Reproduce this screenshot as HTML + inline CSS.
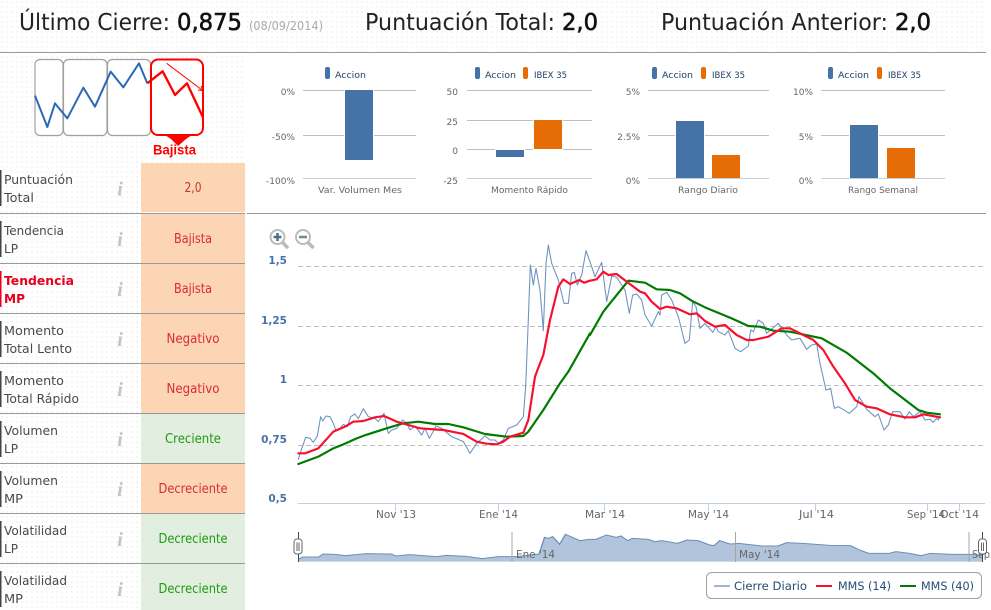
<!DOCTYPE html>
<html lang="es"><head><meta charset="utf-8"><title>Resumen</title>
<style>
html,body{margin:0;padding:0;background:#fff;width:991px;height:610px;overflow:hidden}
svg{display:block;position:absolute;left:0;top:0}
text{font-family:"DejaVu Sans","Liberation Sans",sans-serif}
.h{font-size:23px;fill:#222}
.hb{font-size:23px;fill:#111;stroke:#111;stroke-width:.6px}
.l{font-size:12.5px;fill:#4a4a4a}
.v{font-size:13px;text-anchor:middle}
.r{fill:#d92b3a}.g{fill:#1f9a12}
.i{font-family:"Liberation Serif",serif;font-style:italic;font-weight:bold;font-size:20px;fill:#c4c4c4;text-anchor:middle}
.c{font-size:9px;fill:#666}
.ce{text-anchor:end}
.cl{font-size:9px;fill:#1f3f66}
.x{font-size:10.5px;fill:#666}
.y{font-size:10.5px;fill:#4572a7;font-weight:bold;text-anchor:end}
.lg{font-size:11.5px;fill:#274b75}
.grid{stroke:#c0c0c0;stroke-width:1;fill:none}
.ax{stroke:#c0d0e0;stroke-width:1;fill:none}
</style></head><body>
<svg width="991" height="610" viewBox="0 0 991 610" xmlns="http://www.w3.org/2000/svg">
<defs><pattern id="d" width="5" height="5" patternUnits="userSpaceOnUse"><rect width="5" height="5" fill="#fff"/><rect x="1" y="1" width="2" height="2" fill="#f6f6f6"/></pattern></defs>
<rect x="0" y="0" width="986" height="52" fill="url(#d)"/>
<rect x="0" y="53" width="245" height="557" fill="url(#d)"/>

<!-- header -->
<text class="h" x="19" y="30" textLength="151" lengthAdjust="spacingAndGlyphs">Último Cierre:</text>
<text class="hb" x="177" y="30" textLength="65" lengthAdjust="spacingAndGlyphs">0,875</text>
<text x="249" y="30" font-size="12" fill="#aaa" textLength="74" lengthAdjust="spacingAndGlyphs">(08/09/2014)</text>
<text class="h" x="365" y="30" textLength="190" lengthAdjust="spacingAndGlyphs">Puntuación Total:</text>
<text class="hb" x="562" y="30" textLength="36" lengthAdjust="spacingAndGlyphs">2,0</text>
<text class="h" x="661" y="30" textLength="227" lengthAdjust="spacingAndGlyphs">Puntuación Anterior:</text>
<text class="hb" x="895" y="30" textLength="36" lengthAdjust="spacingAndGlyphs">2,0</text>
<rect x="0" y="52" width="986" height="1" fill="#999"/>
<rect x="247" y="213" width="739" height="1" fill="#999"/>

<!-- logo -->
<g fill="#fff" stroke="#a0a0a0" stroke-width="1.200">
<rect x="35" y="59.500" width="28" height="76" rx="5"/>
<rect x="63.500" y="59.500" width="43.500" height="76" rx="5"/>
<rect x="107.500" y="59.500" width="43" height="76" rx="5"/>
</g>
<rect x="151" y="59.500" width="52" height="75.500" rx="7" fill="#fff" stroke="#f00" stroke-width="2"/>
<polygon points="165,135 192,135 186,139 178,146 171,139" fill="#f00"/>
<g transform="scale(.33333)" fill="none" stroke-linejoin="round">
<polyline points="105,287 142,381 165,310 202,355 250,263 285,320 332,215 370,262 417,190 442,250" stroke="#2a6ab5" stroke-width="6"/>
<polyline points="442,250 488,214 525,285 561,250 609,352" stroke="#f00" stroke-width="7"/>
<polyline points="500,190 606,270" stroke="#f00" stroke-width="3"/>
<polyline points="594,270 609,272 603,258" stroke="#f00" stroke-width="3"/>
</g>
<text x="153" y="154.500" font-size="14" font-weight="bold" fill="#f00" style="font-family:'Liberation Sans',sans-serif" textLength="43" lengthAdjust="spacingAndGlyphs">Bajista</text>

<!-- rows -->
<rect x="141" y="163" width="104" height="49" fill="#fcd5b4"/>
<rect x="141" y="214" width="104" height="49" fill="#fcd5b4"/>
<rect x="141" y="264" width="104" height="49" fill="#fcd5b4"/>
<rect x="141" y="314" width="104" height="49" fill="#fcd5b4"/>
<rect x="141" y="364" width="104" height="49" fill="#fcd5b4"/>
<rect x="141" y="414" width="104" height="49" fill="#e2efe0"/>
<rect x="141" y="464" width="104" height="49" fill="#fcd5b4"/>
<rect x="141" y="514" width="104" height="49" fill="#e2efe0"/>
<rect x="141" y="564" width="104" height="46" fill="#e2efe0"/>
<g fill="#999">
<rect x="0" y="213" width="245" height="1"/><rect x="0" y="263" width="245" height="1"/><rect x="0" y="313" width="245" height="1"/><rect x="0" y="363" width="245" height="1"/><rect x="0" y="413" width="245" height="1"/><rect x="0" y="463" width="245" height="1"/><rect x="0" y="513" width="245" height="1"/><rect x="0" y="563" width="245" height="1"/>
</g>
<g fill="#444">
<rect x="0" y="170" width="1.500" height="36"/><rect x="0" y="221" width="1.500" height="36"/><rect x="0" y="321" width="1.500" height="36"/><rect x="0" y="371" width="1.500" height="36"/><rect x="0" y="421" width="1.500" height="36"/><rect x="0" y="471" width="1.500" height="36"/><rect x="0" y="521" width="1.500" height="36"/><rect x="0" y="571" width="1.500" height="36"/>
</g>
<rect x="0" y="271" width="1.500" height="36" fill="#e8001c"/>

<text class="l" x="4" y="184" textLength="69" lengthAdjust="spacingAndGlyphs">Puntuación</text><text class="l" x="4" y="202" textLength="30" lengthAdjust="spacingAndGlyphs">Total</text>
<text class="l" x="4" y="235" textLength="60" lengthAdjust="spacingAndGlyphs">Tendencia</text><text class="l" x="4" y="253" textLength="14" lengthAdjust="spacingAndGlyphs">LP</text>
<text x="4" y="285" font-size="12.500" font-weight="bold" fill="#e8001c" textLength="70" lengthAdjust="spacingAndGlyphs">Tendencia</text><text x="4" y="303" font-size="12.500" font-weight="bold" fill="#e8001c" textLength="21" lengthAdjust="spacingAndGlyphs">MP</text>
<text class="l" x="4" y="335" textLength="60" lengthAdjust="spacingAndGlyphs">Momento</text><text class="l" x="4" y="353" textLength="68" lengthAdjust="spacingAndGlyphs">Total Lento</text>
<text class="l" x="4" y="385" textLength="60" lengthAdjust="spacingAndGlyphs">Momento</text><text class="l" x="4" y="403" textLength="75" lengthAdjust="spacingAndGlyphs">Total Rápido</text>
<text class="l" x="4" y="435" textLength="54" lengthAdjust="spacingAndGlyphs">Volumen</text><text class="l" x="4" y="453" textLength="14" lengthAdjust="spacingAndGlyphs">LP</text>
<text class="l" x="4" y="485" textLength="54" lengthAdjust="spacingAndGlyphs">Volumen</text><text class="l" x="4" y="503" textLength="19" lengthAdjust="spacingAndGlyphs">MP</text>
<text class="l" x="4" y="535" textLength="63" lengthAdjust="spacingAndGlyphs">Volatilidad</text><text class="l" x="4" y="553" textLength="14" lengthAdjust="spacingAndGlyphs">LP</text>
<text class="l" x="4" y="585" textLength="63" lengthAdjust="spacingAndGlyphs">Volatilidad</text><text class="l" x="4" y="603" textLength="19" lengthAdjust="spacingAndGlyphs">MP</text>

<text class="i" x="120" y="195.500">i</text><text class="i" x="120" y="246">i</text><text class="i" x="120" y="296">i</text><text class="i" x="120" y="346">i</text><text class="i" x="120" y="396">i</text><text class="i" x="120" y="446">i</text><text class="i" x="120" y="496">i</text><text class="i" x="120" y="546">i</text><text class="i" x="120" y="596">i</text>

<text class="v" x="193" y="192" fill="#c0392b" textLength="17" lengthAdjust="spacingAndGlyphs">2,0</text>
<text class="v r" x="193" y="243" textLength="38" lengthAdjust="spacingAndGlyphs">Bajista</text>
<text class="v r" x="193" y="293" textLength="38" lengthAdjust="spacingAndGlyphs">Bajista</text>
<text class="v r" x="193" y="343" textLength="53" lengthAdjust="spacingAndGlyphs">Negativo</text>
<text class="v r" x="193" y="393" textLength="53" lengthAdjust="spacingAndGlyphs">Negativo</text>
<text class="v g" x="193" y="443" textLength="56" lengthAdjust="spacingAndGlyphs">Creciente</text>
<text class="v r" x="193" y="493" textLength="69" lengthAdjust="spacingAndGlyphs">Decreciente</text>
<text class="v g" x="193" y="543" textLength="69" lengthAdjust="spacingAndGlyphs">Decreciente</text>
<text class="v g" x="193" y="593" textLength="69" lengthAdjust="spacingAndGlyphs">Decreciente</text>

<!-- bar chart 1 -->
<path class="grid" d="M303 90.500H416M303 135.500H416"/><path class="ax" d="M303 178.500H416"/>
<rect x="344" y="89.500" width="30" height="71.500" fill="#fff"/><rect x="345" y="90" width="28" height="70" fill="#4572a7"/>
<text class="c ce" x="295" y="95">0%</text><text class="c ce" x="295" y="140">-50%</text><text class="c ce" x="295" y="184">-100%</text>
<text class="c" x="318" y="193" textLength="84" lengthAdjust="spacingAndGlyphs">Var. Volumen Mes</text>
<rect x="325" y="67" width="5" height="12" rx="2" fill="#4572a7"/><text class="cl" x="335" y="78" textLength="31" lengthAdjust="spacingAndGlyphs">Accion</text>

<!-- bar chart 2 -->
<path class="grid" d="M467 90.500H592M467 120.500H592M467 149.500H592"/><path class="ax" d="M467 178.500H592"/>
<rect x="495" y="149" width="30" height="9" fill="#fff"/><rect x="496" y="150" width="28" height="7" fill="#4572a7"/>
<rect x="533" y="119" width="30" height="31" fill="#fff"/><rect x="534" y="120" width="28" height="29" fill="#e66c05"/>
<text class="c ce" x="458" y="95">50</text><text class="c ce" x="458" y="125">25</text><text class="c ce" x="458" y="154">0</text><text class="c ce" x="458" y="184">-25</text>
<text class="c" x="491" y="193" textLength="77" lengthAdjust="spacingAndGlyphs">Momento Rápido</text>
<rect x="475" y="67" width="5" height="12" rx="2" fill="#4572a7"/><text class="cl" x="485" y="78" textLength="31" lengthAdjust="spacingAndGlyphs">Accion</text>
<rect x="523" y="67" width="5" height="12" rx="2" fill="#e66c05"/><text class="cl" x="534" y="78" textLength="33" lengthAdjust="spacingAndGlyphs">IBEX 35</text>

<!-- bar chart 3 -->
<path class="grid" d="M648 90.500H769M648 135.500H769"/><path class="ax" d="M648 178.500H769"/>
<rect x="675" y="120" width="30" height="58" fill="#fff"/><rect x="676" y="121" width="28" height="57" fill="#4572a7"/>
<rect x="712" y="155" width="28" height="23" fill="#e66c05"/>
<text class="c ce" x="640" y="95">5%</text><text class="c ce" x="640" y="140">2.5%</text><text class="c ce" x="640" y="184">0%</text>
<text class="c" x="678" y="193" textLength="60" lengthAdjust="spacingAndGlyphs">Rango Diario</text>
<rect x="652" y="67" width="5" height="12" rx="2" fill="#4572a7"/><text class="cl" x="662" y="78" textLength="31" lengthAdjust="spacingAndGlyphs">Accion</text>
<rect x="701" y="67" width="5" height="12" rx="2" fill="#e66c05"/><text class="cl" x="712" y="78" textLength="33" lengthAdjust="spacingAndGlyphs">IBEX 35</text>

<!-- bar chart 4 -->
<path class="grid" d="M821 90.500H945M821 135.500H945"/><path class="ax" d="M821 178.500H945"/>
<rect x="849" y="124" width="30" height="54" fill="#fff"/><rect x="850" y="125" width="28" height="53" fill="#4572a7"/>
<rect x="887" y="148" width="28" height="30" fill="#e66c05"/>
<text class="c ce" x="813" y="95">10%</text><text class="c ce" x="813" y="140">5%</text><text class="c ce" x="813" y="184">0%</text>
<text class="c" x="848" y="193" textLength="70" lengthAdjust="spacingAndGlyphs">Rango Semanal</text>
<rect x="828" y="67" width="5" height="12" rx="2" fill="#4572a7"/><text class="cl" x="838" y="78" textLength="31" lengthAdjust="spacingAndGlyphs">Accion</text>
<rect x="877" y="67" width="5" height="12" rx="2" fill="#e66c05"/><text class="cl" x="888" y="78" textLength="33" lengthAdjust="spacingAndGlyphs">IBEX 35</text>

<!-- zoom icons -->
<g fill="none" stroke-linecap="round">
<path d="M283 243L287 247" stroke="#bbb" stroke-width="3.500"/><circle cx="277.500" cy="237" r="7" fill="#fff" stroke="#bbb" stroke-width="2"/><path d="M273.500 237H281.500M277.500 233V241" stroke="#4d7287" stroke-width="2.500" stroke-linecap="butt"/>
<path d="M308.500 243L312.500 247" stroke="#bbb" stroke-width="3.500"/><circle cx="303" cy="237" r="7" fill="#fff" stroke="#bbb" stroke-width="2"/><path d="M299 237H307" stroke="#6e8a9a" stroke-width="2.500" stroke-linecap="butt"/>
</g>

<!-- main chart -->
<path d="M298 266.500H985M298 326.500H985M298 385.500H985M298 445.500H985" fill="none" stroke="#bdbdbd" stroke-dasharray="5 3"/>
<path class="ax" d="M298 503.500H985M395.500 503V511M498.500 503V511M604.500 503V511M708.500 503V511M815.500 503V511M927.500 503V511M959.500 503V511"/>
<text class="y" x="287" y="264">1,5</text><text class="y" x="287" y="324">1,25</text><text class="y" x="287" y="383">1</text><text class="y" x="287" y="443">0,75</text><text class="y" x="287" y="502">0,5</text>
<text class="x" x="376" y="518" textLength="40" lengthAdjust="spacingAndGlyphs">Nov '13</text>
<text class="x" x="479" y="518" textLength="39" lengthAdjust="spacingAndGlyphs">Ene '14</text>
<text class="x" x="585" y="518" textLength="40" lengthAdjust="spacingAndGlyphs">Mar '14</text>
<text class="x" x="688" y="518" textLength="41" lengthAdjust="spacingAndGlyphs">May '14</text>
<text class="x" x="799" y="518" textLength="35" lengthAdjust="spacingAndGlyphs">Jul '14</text>
<text class="x" x="907" y="518" textLength="38" lengthAdjust="spacingAndGlyphs">Sep '14</text>
<text class="x" x="940" y="518" textLength="39" lengthAdjust="spacingAndGlyphs">Oct '14</text>

<g transform="translate(260 220) scale(.33333)" fill="none" stroke-linejoin="round" stroke-linecap="round">
<polyline stroke="#6d92c0" stroke-width="3.200" points="115,718 122,695 137,652 150,655 160,667 172,648 182,590 188,603 198,588 210,590 220,610 228,632 240,625 250,613 262,620 272,590 285,582 295,596 310,566 325,590 345,595 355,605 372,580 385,640 395,630 410,625 428,600 440,610 450,630 465,618 485,645 495,625 508,655 522,630 528,618 545,625 575,650 610,665 630,700 650,670 675,648 690,660 705,660 715,670 730,660 745,625 770,615 790,590 797,500 803,350 811,135 820,195 828,145 840,210 850,332 858,130 865,75 875,130 895,180 912,250 925,250 935,160 943,157 952,195 965,165 978,92 990,125"/>
</g>
<g transform="translate(590 220) scale(.33333)" fill="none" stroke-linejoin="round" stroke-linecap="round">
<polyline stroke="#6d92c0" stroke-width="3.200" points="0,125 15,170 35,127 50,245 65,168 80,172 95,195 105,210 118,280 128,225 140,222 155,240 165,285 185,318 205,275 210,285 215,225 230,217 245,240 265,290 285,370 298,360 308,245 318,260 330,325 345,310 368,337 378,320 385,335 405,345 415,332 435,385 452,395 475,378 482,330 490,335 505,300 520,310 530,340 565,310 590,345 605,360 630,355 650,388 665,375 680,372 690,430 708,510 722,505 733,565 745,560 778,580 800,560 807,530 830,568 855,590 865,582 882,630 895,615 908,575 930,575 945,597 958,575 970,590 990,575 1005,600 1020,598 1030,607 1040,595 1045,600 1050,590"/>
</g>
<g transform="translate(260 220) scale(.33333)" fill="none" stroke-linejoin="round" stroke-linecap="round">
<polyline stroke="#007a00" stroke-width="6.500" points="115,732 175,710 220,685 250,673 290,655 320,644 380,625 430,610 475,605 525,612 565,612 610,622 675,642 740,650 790,648 805,635 850,570 900,490 925,455 990,340"/>
</g>
<g transform="translate(590 220) scale(.33333)" fill="none" stroke-linejoin="round" stroke-linecap="round">
<polyline stroke="#007a00" stroke-width="6.500" points="0,345 40,275 60,250 115,182 165,188 200,208 240,210 270,220 305,242 345,262 425,295 475,318 510,320 550,332 600,335 695,355 770,398 850,460 900,505 985,570 1010,578 1050,583"/>
</g>
<g transform="translate(260 220) scale(.33333)" fill="none" stroke-linejoin="round" stroke-linecap="round">
<polyline stroke="#f7102e" stroke-width="6.500" points="115,700 135,700 175,685 220,635 255,620 280,605 310,603 345,592 372,588 410,605 445,615 480,625 550,630 610,642 650,665 680,671 710,673 730,665 750,650 790,638 805,600 825,470 840,430 850,405 870,300 895,200 910,178 930,192 958,180 972,188 990,182"/>
</g>
<g transform="translate(590 220) scale(.33333)" fill="none" stroke-linejoin="round" stroke-linecap="round">
<polyline stroke="#f7102e" stroke-width="6.500" points="0,182 20,178 40,155 55,165 80,162 110,185 150,215 165,220 185,245 210,267 230,260 260,265 300,283 320,280 345,303 375,320 405,315 440,345 470,360 490,360 535,350 575,325 600,325 640,345 670,360 700,390 730,440 765,490 795,540 830,560 860,565 900,583 945,592 975,592 1000,583 1050,592"/>
</g>

<!-- navigator -->
<g transform="translate(280 500) scale(.45455 .33333)">
<polygon fill="#b2c4dc" stroke="none" points="40,185 40,178 50,171 85,171 95,162 120,163 145,167 190,161 245,162 255,168 285,164 345,170 365,166 410,169 445,176 480,170 520,170 570,162 582,112 590,115 600,110 615,133 628,103 660,122 680,118 695,118 718,105 740,112 750,108 765,122 775,115 810,118 825,125 840,122 875,130 895,120 920,122 945,135 955,137 967,122 990,132 1010,130 1060,138 1095,138 1115,128 1150,130 1210,136 1255,137 1275,150 1295,160 1340,160 1355,155 1385,160 1410,167 1430,160 1480,163 1520,163 1545,166 1545,185"/>
<polyline fill="none" stroke="#6d8fb8" stroke-width="3" points="40,178 50,171 85,171 95,162 120,163 145,167 190,161 245,162 255,168 285,164 345,170 365,166 410,169 445,176 480,170 520,170 570,162 582,112 590,115 600,110 615,133 628,103 660,122 680,118 695,118 718,105 740,112 750,108 765,122 775,115 810,118 825,125 840,122 875,130 895,120 920,122 945,135 955,137 967,122 990,132 1010,130 1060,138 1095,138 1115,128 1150,130 1210,136 1255,137 1275,150 1295,160 1340,160 1355,155 1385,160 1410,167 1430,160 1480,163 1520,163 1545,166"/>
</g>
<path d="M512 532V562M735.500 532V562M969 532V562" stroke="#a5a5a5" fill="none"/>
<text x="516" y="558" font-size="10.500" fill="#666" textLength="39" lengthAdjust="spacingAndGlyphs">Ene '14</text>
<text x="739" y="558" font-size="10.500" fill="#666" textLength="41" lengthAdjust="spacingAndGlyphs">May '14</text>
<text x="972" y="558" font-size="10.500" fill="#666" textLength="18" lengthAdjust="spacingAndGlyphs">Sep</text>
<path d="M298.500 532V562M982.500 532V562" stroke="#444" fill="none"/>
<g fill="#fff" stroke="#666">
<rect x="294" y="539" width="8" height="15" rx="3"/><rect x="978.500" y="539" width="8" height="15" rx="3"/>
</g>
<path d="M297 542.500V551M299 542.500V551M981.500 542.500V551M983.500 542.500V551" stroke="#666" fill="none"/>

<!-- legend -->
<rect x="706.500" y="572.500" width="275" height="26" rx="5" fill="#fff" stroke="#a0a0a0"/>
<path d="M714 586H730" stroke="#9db5d3" stroke-width="2"/>
<path d="M816 586H832" stroke="#f7102e" stroke-width="2"/>
<path d="M900 586H916" stroke="#007a00" stroke-width="2"/>
<text class="lg" x="734" y="590" textLength="73" lengthAdjust="spacingAndGlyphs">Cierre Diario</text>
<text class="lg" x="838" y="590" textLength="53" lengthAdjust="spacingAndGlyphs">MMS (14)</text>
<text class="lg" x="921" y="590" textLength="53" lengthAdjust="spacingAndGlyphs">MMS (40)</text>
</svg>
</body></html>
